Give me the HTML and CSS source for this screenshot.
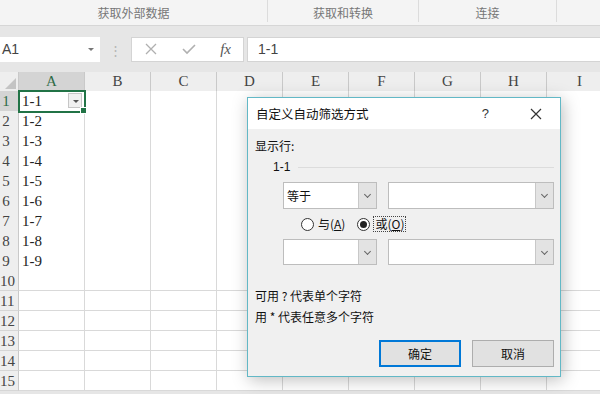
FILE: index.html
```html
<!DOCTYPE html>
<html lang="zh-CN">
<head>
  <meta charset="UTF-8">
  <title>自定义自动筛选方式</title>
  <link rel="stylesheet" href="styles.css">
</head>
<body>
  <div class="ribbon">
    <div class="group g1">获取外部数据</div>
    <div class="group g2">获取和转换</div>
    <div class="group g3">连接</div>
    <div class="group g4"></div>
  </div>

  <div class="fbar">
    <div class="namebox">A1<span class="nb-arrow"></span></div>
    <div class="dots">⋮</div>
    <div class="fbtns">
      <svg width="14" height="14" viewBox="0 0 14 14"><path d="M2 2L12 12M12 2L2 12" stroke="#b0b0b0" stroke-width="1.3" fill="none"/></svg>
      <svg width="16" height="14" viewBox="0 0 16 14"><path d="M2 7L6 11L14 3" stroke="#b0b0b0" stroke-width="1.6" fill="none"/></svg>
      <span class="fx">fx</span>
    </div>
    <div class="finput">1-1</div>
  </div>

  <div class="sheet">
    <div class="corner"></div>
    <div class="ch sel">A</div><div class="ch">B</div><div class="ch">C</div><div class="ch">D</div><div class="ch">E</div><div class="ch">F</div><div class="ch">G</div><div class="ch">H</div><div class="ch">I</div>
  </div>
  <div class="rows" id="rows"></div>

  <!-- Custom AutoFilter dialog -->
  <div class="dialog">
    <div class="dlg-title">
      <span>自定义自动筛选方式</span>
      <span class="dlg-help">?</span>
      <svg class="dlg-close" width="12" height="12" viewBox="0 0 12 12"><path d="M1 1L11 11M11 1L1 11" stroke="#333" stroke-width="1.2" fill="none"/></svg>
    </div>
    <div class="dlg-body">
      <div class="lbl">显示行:</div>
      <div class="legend"><span>1-1</span><div class="rule"></div></div>
      <div class="combo-row first">
        <div class="combo small"><span class="val">等于</span><span class="drop"><i></i></span></div>
        <div class="combo big"><span class="val"></span><span class="drop"><i></i></span></div>
      </div>
      <div class="radio-row">
        <span class="radio"></span><span class="rlabel">与(<u>A</u>)</span>
        <span class="radio on"></span><span class="rlabel focus">或(<u>O</u>)</span>
      </div>
      <div class="combo-row">
        <div class="combo small"><span class="val"></span><span class="drop"><i></i></span></div>
        <div class="combo big"><span class="val"></span><span class="drop"><i></i></span></div>
      </div>
      <div class="hint first">可用 ? 代表单个字符</div>
      <div class="hint">用 * 代表任意多个字符</div>
      <div class="btns">
        <button class="btn default">确定</button>
        <button class="btn">取消</button>
      </div>
    </div>
  </div>

  <script>
    const rows = document.getElementById('rows');
    for (let r = 1; r <= 15; r++) {
      const row = document.createElement('div');
      row.className = 'row';
      let html = `<div class="rh${r === 1 ? ' sel' : ''}"><span>${r}</span></div>`;
      for (let c = 0; c < 9; c++) {
        let text = (c === 0 && r <= 9) ? `1-${r}` : '';
        let cls = 'cell';
        if (r === 1 && c === 0) {
          cls += ' active';
          text += '<span class="filter"></span><span class="handle"></span>';
        }
        html += `<div class="${cls}">${text}</div>`;
      }
      row.innerHTML = html;
      rows.appendChild(row);
    }
  </script>
</body>
</html>
```

FILE: styles.css
```css
:root {
  --grid-line: #d9d9d9;
  --head-bg: #eeeeee;
  --head-line: #c9c9c9;
  --dlg-border: #62b8c6;
  --ui-font: "Noto Sans CJK SC", "Noto Sans", sans-serif;
  --cell-font: "Liberation Serif", "Noto Serif CJK SC", serif;
}
body {
  margin: 0;
  width: 600px;
  height: 394px;
  overflow: hidden;
  position: relative;
  background: #e6e6e6;
  font-family: var(--ui-font);
}
.ribbon {
  display: flex;
  height: 25px;
  background: #f4f4f4;
  border-bottom: 1px solid #d6d6d6;
  color: #777;
  font-size: 12px;
}
.group {
  display: flex;
  align-items: center;
  justify-content: center;
  border-right: 1px solid #dcdcdc;
  margin: 0 0 3px;
  padding-top: 2px;
}
.g1 { width: 267px; }
.g2 { width: 150px; }
.g3 { width: 137px; }
.g4 { flex: 1; border-right: none; }

.fbar {
  display: flex;
  align-items: center;
  height: 46px;
  background: #e6e6e6;
}
.namebox {
  width: 100px;
  height: 25px;
  box-sizing: border-box;
  background: #fff;
  display: flex;
  align-items: center;
  padding-left: 2px;
  font-family: "Liberation Sans", sans-serif;
  font-size: 14px;
  color: #444;
  position: relative;
}
.nb-arrow {
  position: absolute;
  right: 6px;
  top: 11px;
  border-left: 3px solid transparent;
  border-right: 3px solid transparent;
  border-top: 3px solid #777;
}
.dots {
  width: 31px;
  text-align: center;
  color: #b5b5b5;
  font-size: 13px;
}
.fbtns {
  width: 113px;
  height: 25px;
  box-sizing: border-box;
  background: #fff;
  border: 1px solid #d4d4d4;
  display: flex;
  align-items: center;
  justify-content: space-between;
  padding: 0 12px;
}
.fx {
  font-family: "Liberation Serif", serif;
  font-style: italic;
  font-size: 15px;
  color: #555;
}
.finput {
  flex: 1;
  height: 25px;
  margin-left: 3px;
  box-sizing: border-box;
  background: #fff;
  border: 1px solid #d4d4d4;
  border-right: none;
  display: flex;
  align-items: center;
  padding-left: 10px;
  font-family: "Liberation Sans", sans-serif;
  font-size: 14px;
  color: #444;
}

.sheet, .row {
  display: grid;
  grid-template-columns: 19px repeat(9, 66px);
}
.sheet {
  height: 19px;
}
.corner {
  background: var(--head-bg);
  border-right: 1px solid var(--head-line);
  border-bottom: 1px solid var(--head-line);
  position: relative;
}
.corner::after {
  content: "";
  position: absolute;
  right: 2px;
  bottom: 2px;
  border-left: 11px solid transparent;
  border-bottom: 11px solid #c4c4c4;
}
.ch {
  background: var(--head-bg);
  border-right: 1px solid var(--head-line);
  border-bottom: 1px solid var(--head-line);
  text-align: center;
  font-family: var(--cell-font);
  font-size: 15px;
  line-height: 19px;
  color: #444;
}
.ch.sel, .rh.sel {
  background: #d4d4d4;
  color: #2f6b47;
  border-bottom-color: #217346;
}
.rh.sel {
  border-bottom-color: var(--head-line);
  border-right-color: #217346;
}
.row {
  height: 20px;
}
.rh {
  background: var(--head-bg);
  border-right: 1px solid var(--head-line);
  border-bottom: 1px solid #d6d6d6;
  font-family: var(--cell-font);
  font-size: 15px;
  line-height: 20px;
  color: #444;
  overflow: hidden;
  white-space: nowrap;
  position: relative;
}
.rh span {
  display: block;
  width: 12px;
  text-align: center;
  margin: 0 -10px;
  padding: 0 10px;
}
.cell {
  background: #fff;
  border-right: 1px solid var(--grid-line);
  border-bottom: 1px solid var(--grid-line);
  font-family: var(--cell-font);
  font-size: 15px;
  line-height: 20px;
  padding-left: 3px;
  color: #222;
  position: relative;
}
.cell.active {
  outline: 2px solid #217346;
  outline-offset: -1px;
  z-index: 1;
}
.filter {
  position: absolute;
  right: 2px;
  top: 2px;
  width: 14px;
  height: 15px;
  box-sizing: border-box;
  background: #f0f0f0;
  border: 1px solid #c6c6c6;
}
.filter::after {
  content: "";
  position: absolute;
  left: 4px;
  top: 6px;
  border-left: 3px solid transparent;
  border-right: 3px solid transparent;
  border-top: 3px solid #555;
}
.handle {
  position: absolute;
  right: -3px;
  bottom: -3px;
  width: 5px;
  height: 5px;
  background: #217346;
  border: 1px solid #fff;
}

.dialog {
  position: absolute;
  left: 247px;
  top: 97px;
  width: 314px;
  height: 280px;
  box-sizing: border-box;
  border: 1px solid var(--dlg-border);
  background: #f0f0f0;
  box-shadow: 2px 3px 16px rgba(0, 0, 0, 0.26);
  font-size: 12px;
  color: #111;
}
.dlg-title {
  height: 31px;
  background: #fff;
  display: flex;
  align-items: center;
  padding-left: 8px;
  font-size: 12.5px;
}
.dlg-help {
  margin-left: auto;
  font-family: "Liberation Sans", sans-serif;
  font-size: 13px;
  color: #333;
}
.dlg-close {
  margin: 0 18px 0 41px;
}
.dlg-body {
  padding: 0 6px 0 7px;
}
.lbl {
  margin-top: 9px;
  line-height: 16px;
}
.legend {
  display: flex;
  align-items: center;
  margin-top: 5px;
  padding-left: 18px;
  line-height: 16px;
  font-family: "Liberation Sans", sans-serif;
}
.rule {
  flex: 1;
  height: 1px;
  background: #dcdcdc;
  margin-left: 8px;
}
.combo-row {
  display: flex;
  gap: 11px;
  margin: 7px 0 0 28px;
  height: 26px;
}
.combo-row.first {
  height: 27px;
}
.combo {
  display: flex;
  box-sizing: border-box;
  border: 1px solid #bdbdbd;
  background: #fff;
}
.combo.small { width: 94px; }
.combo.big { width: 166px; }
.val {
  flex: 1;
  padding-left: 3px;
  display: flex;
  align-items: center;
}
.drop {
  width: 17px;
  background: #e3e3e3;
  border-left: 1px solid #c8c8c8;
  display: flex;
  align-items: center;
  justify-content: center;
}
.drop i {
  width: 4px;
  height: 4px;
  border-right: 1px solid #666;
  border-bottom: 1px solid #666;
  transform: rotate(45deg);
  margin-top: -2px;
}
.radio-row {
  display: flex;
  align-items: center;
  margin: 7px 0 0 46px;
  height: 16px;
}
.radio {
  width: 11px;
  height: 11px;
  border: 1px solid #333;
  border-radius: 50%;
  background: #fff;
  position: relative;
  margin-right: 4px;
}
.radio.on {
  margin-left: 12px;
}
.radio.on::after {
  content: "";
  position: absolute;
  left: 2px;
  top: 2px;
  width: 7px;
  height: 7px;
  border-radius: 50%;
  background: #222;
}
.rlabel {
  line-height: 14px;
}
.rlabel.focus {
  outline: 1px dotted #444;
  padding: 0 1px;
}
.hint {
  line-height: 16px;
  margin-top: 5px;
}
.hint.first {
  margin-top: 23px;
}
.btns {
  display: flex;
  justify-content: flex-end;
  gap: 11px;
  margin-top: 15px;
}
.btn {
  width: 82px;
  height: 27px;
  background: #e1e1e1;
  border: 1px solid #adadad;
  font-family: var(--ui-font);
  font-size: 12px;
  color: #111;
  padding: 0;
}
.btn.default {
  border: 2px solid #0078d7;
}
```
